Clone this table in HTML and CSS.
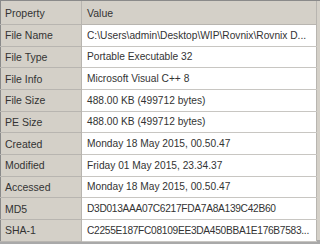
FILE: index.html
```html
<!DOCTYPE html>
<html>
<head>
<meta charset="utf-8">
<link rel="stylesheet" href="styles.css">
</head>
<body>
<div class="frame">
<table class="props">
<thead>
<tr><th class="key">Property</th><th class="val">Value</th></tr>
</thead>
<tbody>
<tr><td class="key">File Name</td><td class="val">C:\Users\admin\Desktop\WIP\Rovnix\Rovnix D...</td></tr>
<tr><td class="key">File Type</td><td class="val">Portable Executable 32</td></tr>
<tr><td class="key">File Info</td><td class="val">Microsoft Visual C++ 8</td></tr>
<tr><td class="key">File Size</td><td class="val">488.00 KB (499712 bytes)</td></tr>
<tr><td class="key">PE Size</td><td class="val">488.00 KB (499712 bytes)</td></tr>
<tr><td class="key">Created</td><td class="val">Monday 18 May 2015, 00.50.47</td></tr>
<tr><td class="key">Modified</td><td class="val">Friday 01 May 2015, 23.34.37</td></tr>
<tr><td class="key">Accessed</td><td class="val">Monday 18 May 2015, 00.50.47</td></tr>
<tr><td class="key">MD5</td><td class="val hash">D3D013AAA07C6217FDA7A8A139C42B60</td></tr>
<tr><td class="key">SHA-1</td><td class="val hash">C2255E187FC08109EE3DA450BBA1E176B7583...</td></tr>
</tbody>
</table>
</div>
</body>
</html>
```
FILE: styles.css
```css
html, body {
  margin: 0;
  padding: 0;
}
body {
  width: 320px;
  height: 244px;
  overflow: hidden;
  background: #a9a9a9;
}
.frame {
  width: 320px;
  height: 240px;
  background: #d4d0c8;
  border-top: 1px solid #8a8a8a;
  box-sizing: border-box;
}
.props {
  border-collapse: collapse;
  width: 317px;
  table-layout: fixed;
  font-family: "Liberation Sans", Arial, sans-serif;
  font-size: 10.5px;
  color: #333;
}
.props th, .props td {
  text-align: left;
  font-weight: normal;
  padding: 0 0 0 4px;
  white-space: nowrap;
  overflow: hidden;
  border-bottom: 1px solid #c8c6c2;
}
.props th {
  height: 23px;
  background: #d4d0c8;
  border-bottom: 1px solid #b8b5b0;
}
.props td {
  height: 20.67px;
}
.props .key {
  width: 76px;
  background: #d4d0c8;
  border-left: 1px solid #8a8a8a;
  border-right: 1px solid #b8b5b0;
  border-bottom-color: #b8b5b0;
}
.props .val {
  font-size: 10.2px;
  padding-left: 5px;
}
.props td.val {
  background: #fff;
  border-right: 1px solid #b8b5b0;
}
.props th.val {
  font-size: 10.5px;
  border-right: 1px solid #b8b5b0;
}
.props .hash {
  letter-spacing: -0.3px;
}
```
